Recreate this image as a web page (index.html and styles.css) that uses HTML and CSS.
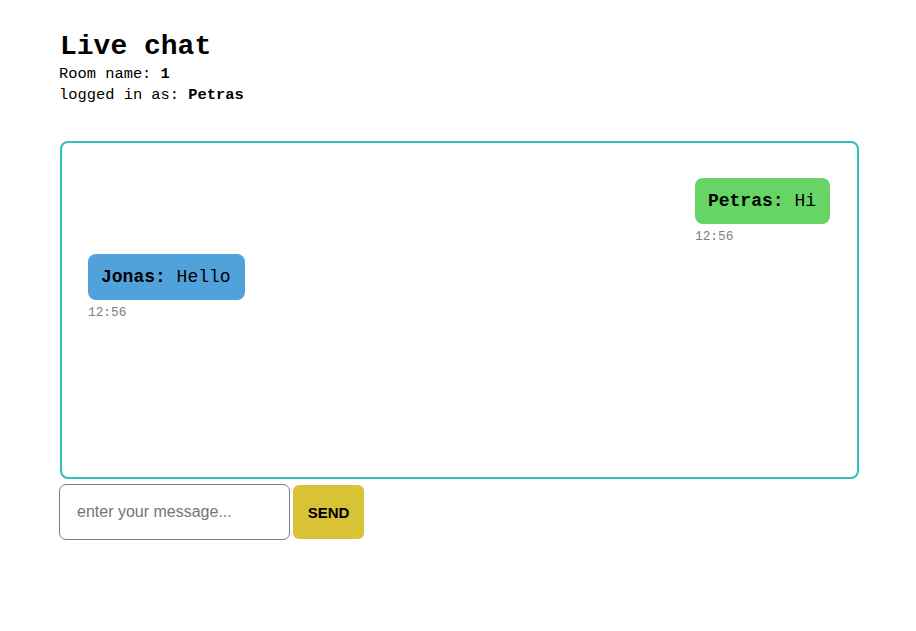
FILE: index.html
```html
<!DOCTYPE html>
<html>
<head>
<meta charset="utf-8">
<link rel="stylesheet" href="styles.css">
</head>
<body>
<div class="page">
  <h1 class="title">Live chat</h1>
  <div class="meta">Room name: <b>1</b></div>
  <div class="meta">logged in as: <b>Petras</b></div>
  <div class="chat">
    <div class="msg mine">
      <div class="bubble green"><b>Petras:</b> Hi</div>
      <div class="time">12:56</div>
    </div>
    <div class="msg">
      <div class="bubble blue"><b>Jonas:</b> Hello</div>
      <div class="time">12:56</div>
    </div>
  </div>
  <div class="composer">
    <input class="input" type="text" placeholder="enter your message...">
    <button class="send">SEND</button>
  </div>
</div>
</body>
</html>
```
FILE: styles.css
```css
* { box-sizing: border-box; }
body {
  margin: 0;
  background: #fff;
  font-family: "Liberation Mono", "DejaVu Sans Mono", monospace;
  color: #000;
}
.page {
  padding: 30px 0 0 59px;
  width: 860px;
}
.title {
  margin: 0;
  font-size: 28px;
  line-height: 34px;
  font-weight: bold;
  padding-left: 1px;
}
.meta {
  font-size: 15.4px;
  line-height: 21px;
}
.chat {
  margin-top: 35px;
  margin-left: 1px;
  width: 799px;
  height: 338px;
  border: 2px solid #2fc0bd;
  border-radius: 8px;
  padding: 35px 26px;
  display: flex;
  flex-direction: column;
  gap: 10px;
}
.msg {
  display: flex;
  flex-direction: column;
  align-items: flex-start;
  align-self: flex-start;
}
.msg.mine { align-self: flex-end; margin-right: 1px; }
.bubble {
  font-size: 18px;
  line-height: 22px;
  padding: 12px 14px 12px 13px;
  border-radius: 8px;
}
.green { background: #66d566; }
.blue { background: #51a2da; }
.time {
  font-size: 12.8px;
  color: #808080;
  margin-top: 5px;
  line-height: 15px;
}
.composer {
  display: flex;
  align-items: center;
  gap: 3px;
  margin-top: 5px;
}
.input {
  width: 231px;
  height: 56px;
  border: 1px solid #777f8c;
  border-radius: 7px;
  padding: 0 17px;
  font-family: "Liberation Sans", Arial, sans-serif;
  font-size: 16px;
  color: #333;
}
.input::placeholder { color: #757575; }
.send {
  width: 71px;
  height: 54px;
  border: none;
  border-radius: 6px;
  background: #d8c235;
  font-family: "Liberation Sans", Arial, sans-serif;
  font-weight: bold;
  font-size: 15px;
  color: #000;
}
```
